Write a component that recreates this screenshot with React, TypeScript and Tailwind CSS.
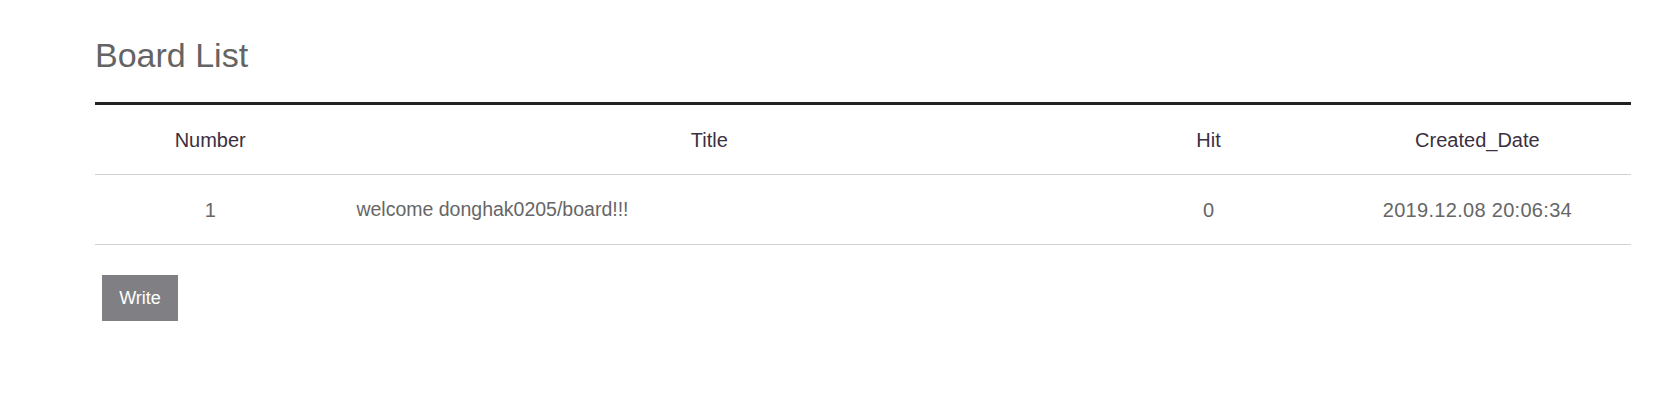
const rows = [
  { id: 1, title: "welcome donghak0205/board!!!", hit: 0, created: "2019.12.08 20:06:34" },
];

export default function App() {
  return (
    <div className="min-h-screen bg-white pl-[95px] pr-[34px] pt-[38px] font-['Liberation_Sans',Arial,sans-serif]">
      <h2 className="text-[34px] leading-none text-[#646464] mb-[30px]">Board List</h2>

      <div className="border-t-[3px] border-[#222222]">
        <div className="flex h-[70px] items-center border-b border-[#d2d2d2] text-[20px] text-[#3a3040]">
          <div className="w-[15%] text-center">Number</div>
          <div className="w-[50%] text-center">Title</div>
          <div className="w-[15%] text-center">Hit</div>
          <div className="w-[20%] text-center">Created_Date</div>
        </div>

        {rows.map((row) => (
          <div
            key={row.id}
            className="flex h-[70px] items-center border-b border-[#d2d2d2] text-[20px] text-[#666666]"
          >
            <div className="w-[15%] text-center">{row.id}</div>
            <div className="w-[50%] pl-[31px] text-left text-[19.5px]">{row.title}</div>
            <div className="w-[15%] text-center">{row.hit}</div>
            <div className="w-[20%] text-center tracking-[0.3px]">{row.created}</div>
          </div>
        ))}
      </div>

      <button className="mt-[30px] ml-[7px] h-[46px] w-[76px] bg-[#7f7f84] text-[18px] text-white">
        Write
      </button>
    </div>
  );
}
